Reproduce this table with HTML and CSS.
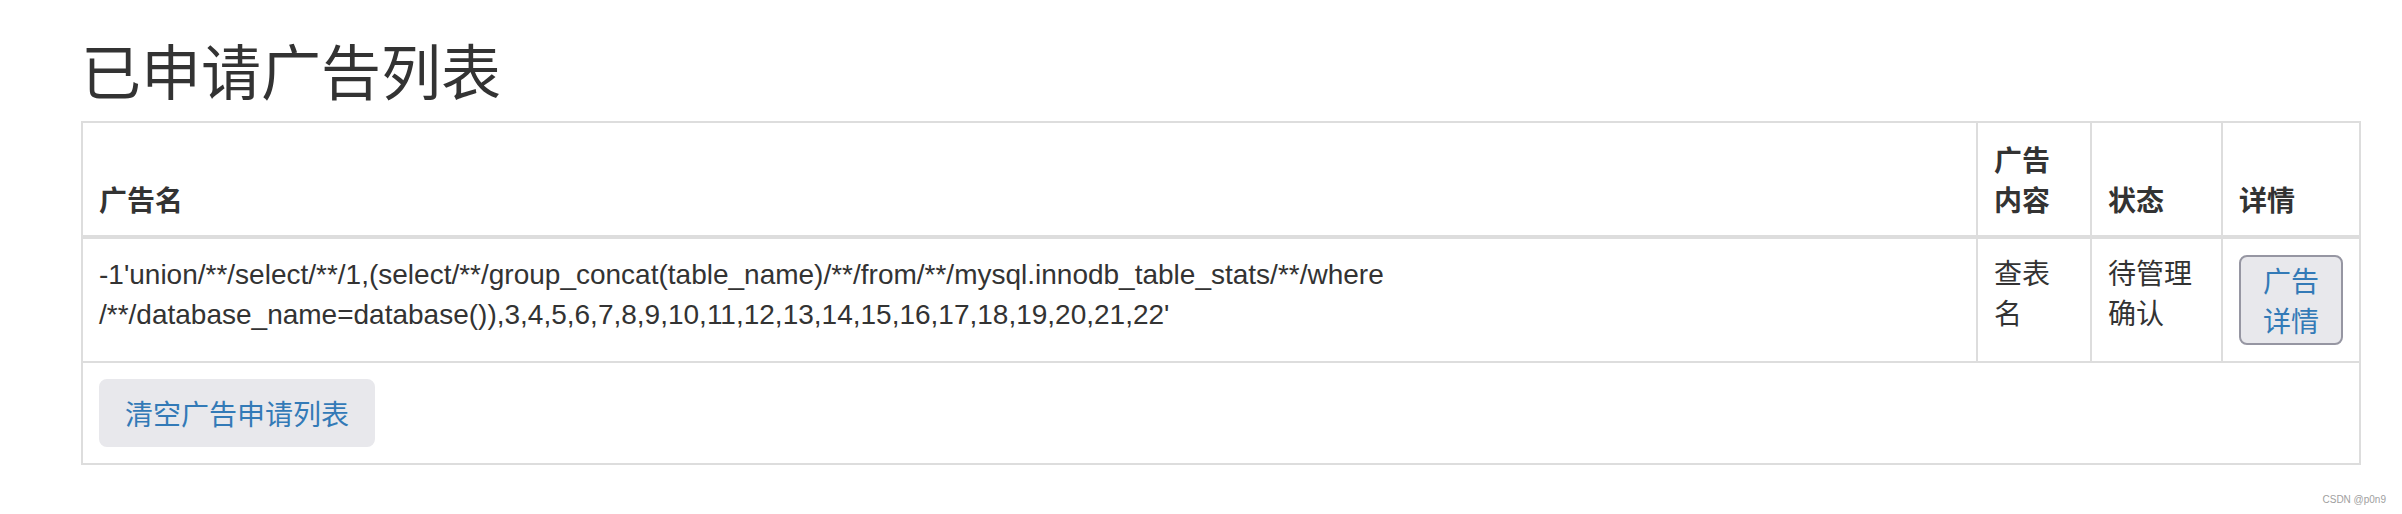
FILE: index.html
```html
<!DOCTYPE html>
<html lang="zh-CN">
<head>
<meta charset="utf-8">
<title>已申请广告列表</title>
<link rel="stylesheet" href="styles.css">
</head>
<body>
<div class="page">
  <h2 class="title">已申请广告列表</h2>
  <table class="ads">
    <colgroup>
      <col class="c-name">
      <col class="c-content">
      <col class="c-status">
      <col class="c-detail">
    </colgroup>
    <thead>
      <tr>
        <th>广告名</th>
        <th>广告内容</th>
        <th>状态</th>
        <th>详情</th>
      </tr>
    </thead>
    <tbody>
      <tr>
        <td>-1'union/**/select/**/1,(select/**/group_concat(table_name)/**/from/**/mysql.innodb_table_stats/**/where /**/database_name=database()),3,4,5,6,7,8,9,10,11,12,13,14,15,16,17,18,19,20,21,22'</td>
        <td>查表名</td>
        <td>待管理确认</td>
        <td><button class="btn btn-detail" type="button">广告详情</button></td>
      </tr>
      <tr>
        <td colspan="4"><button class="btn btn-clear" type="button">清空广告申请列表</button></td>
      </tr>
    </tbody>
  </table>
</div>
<div class="watermark">CSDN @p0n9</div>
</body>
</html>
```
FILE: styles.css
```css
html, body {
  margin: 0;
  padding: 0;
  background: #ffffff;
}

body {
  font-family: "Liberation Sans", "Noto Sans CJK SC", sans-serif;
  font-size: 28px;
  line-height: 40px;
  color: #333333;
  position: relative;
  width: 2402px;
  height: 514px;
  overflow: hidden;
}

.page {
  padding: 0 43px 0 81px;
}

.title {
  font-family: "Noto Sans CJK SC", sans-serif;
  font-size: 60px;
  font-weight: 400;
  line-height: 66px;
  margin: 36px 0 19px;
  color: #333333;
}

.ads {
  width: 2278px;
  table-layout: fixed;
  border-collapse: collapse;
  border-spacing: 0;
  border: 2px solid #dddddd;
}

.c-name { width: 1895px; }
.c-content { width: 114px; }
.c-status { width: 131px; }
.c-detail { width: 138px; }

.ads th,
.ads td {
  border: 2px solid #dddddd;
  padding: 16px;
  text-align: left;
}

.ads th {
  font-weight: 700;
  vertical-align: bottom;
  border-bottom-width: 4px;
  font-family: "Noto Sans CJK SC", sans-serif;
}

.ads td {
  vertical-align: top;
}

.btn {
  font-family: "Noto Sans CJK SC", sans-serif;
  font-size: 28px;
  line-height: 40px;
  color: #337ab7;
  background: #e8e8ec;
  border: 2px solid #e8e8ec;
  border-radius: 8px;
  cursor: pointer;
  text-align: center;
}

.btn-clear {
  padding: 12px 24px;
  white-space: nowrap;
}

.btn-detail {
  padding: 3px 21px;
  border-color: #9696a2;
  white-space: normal;
}

.watermark {
  position: absolute;
  right: 16px;
  bottom: 8px;
  font-family: "Liberation Sans", sans-serif;
  font-size: 10px;
  line-height: 12px;
  color: #a0a0a0;
}
```
